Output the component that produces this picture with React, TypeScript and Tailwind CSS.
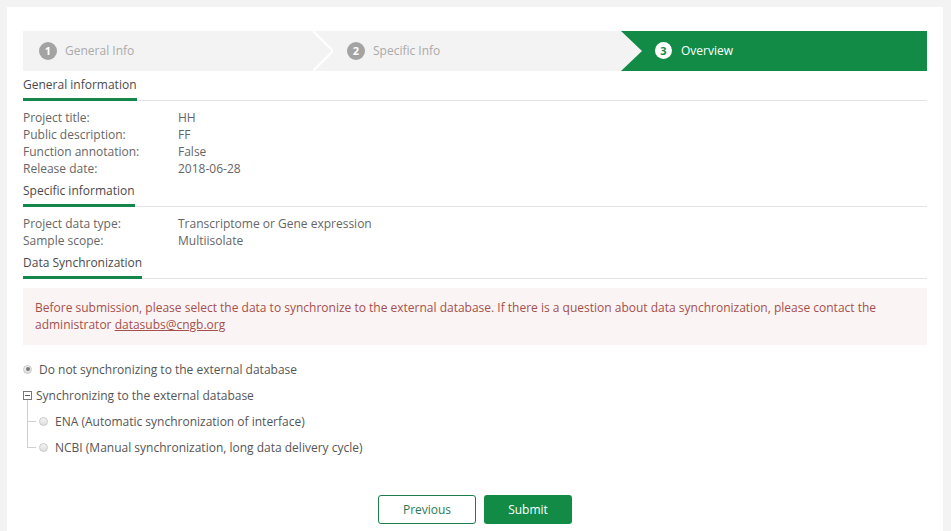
import React from "react";

const font = { fontFamily: '"Open Sans", "Noto Sans", sans-serif' };

function Heading({ children }: { children: React.ReactNode }) {
  return (
    <div className="mt-[5px] flex border-b border-[#e3e3e3] text-[12px] leading-[17px]">
      <span className="block text-[#4a4a4a] pb-[5px] border-b-[3px] border-[#15874a] mb-[-1px]">
        {children}
      </span>
    </div>
  );
}

function Row({ label, value }: { label: string; value: string }) {
  return (
    <div className="flex text-[12px] leading-[17px] text-[#666]">
      <div className="w-[155px]">{label}</div>
      <div>{value}</div>
    </div>
  );
}

function Radio({ checked }: { checked?: boolean }) {
  return (
    <span className="inline-flex items-center justify-center w-[9px] h-[9px] rounded-full border border-[#c9c9c9] bg-gradient-to-b from-[#f4f4f4] to-[#dedede] shrink-0">
      {checked && <span className="w-[4px] h-[4px] rounded-full bg-[#7a7a7a]" />}
    </span>
  );
}

export default function App() {
  return (
    <div className="min-h-screen bg-[#f3f3f3] pt-[7px] px-[7px] pr-[8px]" style={font}>
      <div className="bg-white px-4 pt-6 pb-10 min-h-[600px]">
        {/* Steps */}
        <div className="flex h-[40px] bg-[#f3f3f3] text-[12px] leading-[17px]">
          <div className="w-[290px] flex items-center pl-4 gap-2 text-[#aaa] pb-px">
            <span className="w-[18px] h-[18px] rounded-full bg-[#a3a3a3] text-white text-[11px] font-bold flex items-center justify-center">1</span>
            <span>General Info</span>
          </div>
          <svg width="20" height="40" viewBox="0 0 20 40" className="shrink-0">
            <polyline points="0,0 20,20 0,40" fill="none" stroke="#ffffff" strokeWidth="2" />
          </svg>
          <div className="flex-1 flex items-center pl-[14px] gap-2 text-[#aaa] pb-px">
            <span className="w-[18px] h-[18px] rounded-full bg-[#a3a3a3] text-white text-[11px] font-bold flex items-center justify-center">2</span>
            <span>Specific Info</span>
          </div>
          <div className="w-[306px] flex items-center pl-[34px] gap-[9px] bg-[#128b46] text-white pb-px [clip-path:polygon(0_0,100%_0,100%_100%,0_100%,21px_50%)]">
            <span className="w-[17px] h-[17px] rounded-full bg-white text-[#128b46] text-[11px] font-bold flex items-center justify-center">3</span>
            <span>Overview</span>
          </div>
        </div>

        <Heading>General information</Heading>
        <div className="mt-2">
          <Row label="Project title:" value="HH" />
          <Row label="Public description:" value="FF" />
          <Row label="Function annotation:" value="False" />
          <Row label="Release date:" value="2018-06-28" />
        </div>

        <Heading>Specific information</Heading>
        <div className="mt-2">
          <Row label="Project data type:" value="Transcriptome or Gene expression" />
          <Row label="Sample scope:" value="Multiisolate" />
        </div>

        <Heading>Data Synchronization</Heading>

        <div className="mt-[9px] bg-[#faf4f4] px-3 pt-[11px] pb-[12px] text-[12px] leading-[17px] text-[#a5504c]">
          Before submission, please select the data to synchronize to the external database. If there is a question about data synchronization, please contact the administrator{" "}
          <a className="underline">datasubs@cngb.org</a>
        </div>

        <div className="mt-[11px] text-[12px] leading-[17px] text-[#555]">
          <div className="h-[26px] flex items-center gap-[7px]">
            <Radio checked />
            <span>Do not synchronizing to the external database</span>
          </div>
          <div className="h-[26px] flex items-center gap-[4px]">
            <span className="relative w-[9px] h-[9px] border border-[#777] shrink-0 flex items-center justify-center">
              <span className="w-[5px] h-px bg-[#555]" />
            </span>
            <span>Synchronizing to the external database</span>
          </div>
          <div className="relative ml-[4px]">
            <span className="absolute left-0 top-[-8px] bottom-[13px] w-px bg-[#cfcfcf]" />
            <div className="h-[26px] flex items-center">
              <span className="w-[9px] h-px bg-[#cfcfcf]" />
              <span className="ml-[3px] flex"><Radio /></span>
              <span className="ml-[7px]">ENA (Automatic synchronization of interface)</span>
            </div>
            <div className="h-[26px] flex items-center">
              <span className="w-[9px] h-px bg-[#cfcfcf]" />
              <span className="ml-[3px] flex"><Radio /></span>
              <span className="ml-[7px]">NCBI (Manual synchronization, long data delivery cycle)</span>
            </div>
          </div>
        </div>

        <div className="mt-[35px] flex justify-center gap-2">
          <button className="w-[98px] h-[29px] rounded-[3px] border border-[#1d7d4c] text-[#2b7a55] text-[12px] bg-white">Previous</button>
          <button className="w-[88px] h-[29px] rounded-[3px] bg-[#128b46] text-white text-[12px]">Submit</button>
        </div>
      </div>
    </div>
  );
}
